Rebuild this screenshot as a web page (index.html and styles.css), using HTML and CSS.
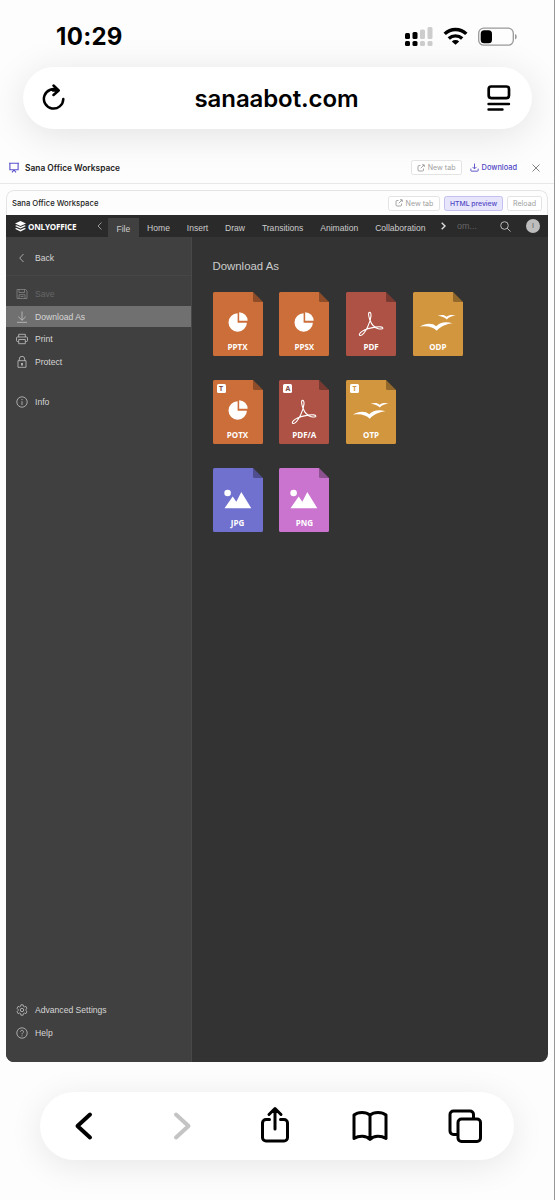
FILE: index.html
```html
<!DOCTYPE html>
<html lang="en">
  <head>
    <meta charset="UTF-8" />
    <meta name="viewport" content="width=device-width, initial-scale=1.0" />
    <link rel="stylesheet" href="styles.css">
    <title>Sana Office Workspace</title>
  </head>
  <body>
    <svg class="sprite" width="0" height="0">
      <symbol id="page" viewBox="0 0 50 64">
        <path d="M1.500 0H40L50 10V62.500a1.500 1.500 0 0 1-1.500 1.500h-47A1.500 1.500 0 0 1 0 62.500v-61A1.500 1.500 0 0 1 1.500 0z" fill="currentColor" />
        <path d="M40 0l10 10H41.500A1.500 1.500 0 0 1 40 8.500z" fill="#000" fill-opacity=".3" />
      </symbol>
      <symbol id="chart" viewBox="0 0 50 64">
        <path d="M24.600 21.300v9.400h9.300A9.200 9.200 0 1 1 24.600 21.300z" fill="#fff" />
        <path d="M26.200 20.200a8.600 8.600 0 0 1 8.400 8.600h-8.400z" fill="#fff" />
      </symbol>
      <symbol id="acrobat" viewBox="0 0 50 64">
        <path d="M23.600 20.400c-1.700 0-1 3.600.2 7.400 1.700 4.700 4.700 8 8.500 8.900 2.500.6 4.700.3 4.600-.7-.1-1.300-4-1.400-7.500-.9-4.500.6-9.500 1.900-13 4-2.600 1.600-3.900 3.900-2.500 4.300 2.200.5 5.300-3.700 7.700-8.500 2.200-4.400 3.200-8.300 3.400-11 .1-2-.3-3.500-1.400-3.500z" fill="none" stroke="#fff" stroke-width="1.100" />
      </symbol>
      <symbol id="birds" viewBox="0 0 50 64">
        <path d="M7 34.700c6-3.800 12.500-3.600 16.300-.4 3.500-3.900 9.500-5.100 16.200-3-5.800.6-11.700 3-15.700 7.400-3.800-3.700-9.500-5.300-16.800-4z" fill="#fff" />
        <path d="M24.800 23.700c4-1.300 6.800-.9 8.800 1.100 2.200-1.800 5.300-2.400 9-1.200-3.800.4-6.500 1.500-8.800 3.800-2.300-2.200-5-3.400-9-3.700z" fill="#fff" />
      </symbol>
      <symbol id="picture" viewBox="0 0 50 64">
        <circle cx="14.600" cy="25" r="3.300" fill="#fff" />
        <path d="M11.500 40.300l8.200-11.800 3.600 5.200 5-9.700 10 16.300z" fill="#fff" />
      </symbol>
      <symbol id="external" viewBox="0 0 16 16">
        <path d="M7 3H4a2 2 0 0 0-2 2v7a2 2 0 0 0 2 2h7a2 2 0 0 0 2-2V9M10 1.500h4.500V6M14 2L7.500 8.500" />
      </symbol>
    </svg>

    <header class="status">
      <span class="time">10:29</span>
      <svg class="status-icons" width="114" height="22" viewBox="0 0 114 22">
        <g>
          <rect x="1" y="7" width="5" height="6" rx="1.500" />
          <rect x="1" y="15" width="5" height="5" rx="1.500" />
          <rect x="8.500" y="6" width="5" height="7" rx="1.500" />
          <rect x="8.500" y="15" width="5" height="5" rx="1.500" />
          <g fill="#cdcdcd">
            <rect x="16" y="3.500" width="5" height="9.500" rx="1.500" />
            <rect x="16" y="15" width="5" height="5" rx="1.500" />
            <rect x="23.500" y="1" width="5" height="12" rx="1.500" />
            <rect x="23.500" y="15" width="5" height="5" rx="1.500" />
          </g>
        </g>
        <g fill="none" stroke="#000" stroke-width="3.400">
          <path d="M40.700 7.900a15.500 15.500 0 0 1 21.600 0" />
          <path d="M44.800 12.500a10 10 0 0 1 13.400 0" />
        </g>
        <path d="M51.500 18.800l-3.700-3.300a5.500 5.500 0 0 1 7.400 0z" />
        <rect x="74.700" y="2.200" width="34.600" height="17" rx="5" fill="none" stroke="#999" stroke-width="1.300" />
        <rect x="76.700" y="4.200" width="11.300" height="13" rx="3.500" />
        <path d="M111 8v5.500c2.300-.8 2.300-4.700 0-5.500z" fill="#999" />
      </svg>
    </header>

    <div class="address">
      <svg width="24" height="28" viewBox="0 0 24 28" fill="none" stroke="#000" stroke-width="2.500" stroke-linecap="round" stroke-linejoin="round">
        <path d="M21.300 15A9.700 9.700 0 1 1 16.500 6.500H11M11.500 1.500l5.200 5-5.200 4.500" />
      </svg>
      <span class="domain">sanaabot.com</span>
      <svg width="24" height="28" viewBox="0 0 24 28" fill="none" stroke="#000" stroke-width="2.700" stroke-linecap="round">
        <rect x="1.700" y="2.500" width="20.300" height="11.600" rx="2.500" />
        <path d="M1.500 20h20.500M1.500 25.500h14" stroke-width="2.400" />
      </svg>
    </div>

    <div class="app-bar">
      <svg class="easel" width="10" height="11" viewBox="0 0 10 11" fill="none" stroke="#5a50cc" stroke-width="1.100">
        <path d="M0 1.200h10M.9 1.200v6.600h8.200V1.200M3 10.300l2-2.300 2 2.300" />
      </svg>
      <strong>Sana Office Workspace</strong>
      <button class="btn btn-top"><svg class="line-icon" width="8" height="8"><use href="#external" /></svg>New tab</button>
      <a class="download">
        <svg width="9" height="9" viewBox="0 0 16 16" fill="none" stroke="currentColor" stroke-width="1.600">
          <path d="M8 1v9M4.500 7L8 10.500 11.500 7M1.500 10v3.500a1 1 0 0 0 1 1h11a1 1 0 0 0 1-1V10" />
        </svg>Download</a>
      <svg class="close" width="8" height="8" viewBox="0 0 8 8" stroke="#777" stroke-width=".9"><path d="M.5.5l7 7M7.500.5l-7 7" /></svg>
    </div>

    <main class="workspace">
      <div class="workspace-bar">
        <span class="workspace-name">Sana Office Workspace</span>
        <button class="btn btn-tab"><svg class="line-icon" width="8" height="8"><use href="#external" /></svg>New tab</button>
        <button class="btn btn-preview">HTML preview</button>
        <button class="btn btn-reload">Reload</button>
      </div>

      <nav class="tabs">
        <svg class="logo" width="11" height="11" viewBox="0 0 11 11" fill="#fff">
          <path d="M5.500 0L11 2.500 5.500 5 0 2.500z" />
          <path d="M1.500 4.300l4 1.800 4-1.800 1.500.8-5.500 2.500L0 5.100z" />
          <path d="M1.500 7l4 1.800 4-1.800 1.500.8-5.500 2.600L0 7.800z" />
        </svg>
        <span class="brand">ONLYOFFICE</span>
        <svg class="prev" width="5" height="8" viewBox="0 0 5 8" fill="none" stroke="#999" stroke-width="1"><path d="M4.500.5L1 4l3.500 3.500" /></svg>
        <span class="tab active">File</span>
        <span class="tab">Home</span>
        <span class="tab">Insert</span>
        <span class="tab">Draw</span>
        <span class="tab">Transitions</span>
        <span class="tab">Animation</span>
        <span class="tab">Collaboration</span>
        <svg class="next" width="5" height="8" viewBox="0 0 5 8" fill="none" stroke="#ddd" stroke-width="1.400"><path d="M.7.7L4 4 .7 7.300" /></svg>
        <span class="doc-name">om...</span>
        <svg class="search" width="11" height="11" viewBox="0 0 11 11" fill="none" stroke="#bbb" stroke-width="1"><circle cx="4.500" cy="4.500" r="3.800" /><path d="M7.200 7.200l3.300 3.300" /></svg>
        <span class="avatar">I</span>
      </nav>

      <div class="panel">
        <aside class="menu">
          <a class="item back">
            <svg viewBox="0 0 12 12"><path d="M7.500 2L3.700 6l3.800 4" /></svg>Back</a>
          <a class="item disabled">
            <svg viewBox="0 0 12 12"><path d="M1 1.500h8.500L11 3v7.500H1zM3 1.500v3h5.500v-3M3 10.500V6.700h6v3.800M4.500 8.500h3" /></svg>Save</a>
          <a class="item selected">
            <svg viewBox="0 0 12 12"><path d="M6 .5v8.700M2.300 5.700L6 9.300l3.700-3.600M1 11.300h10" /></svg>Download As</a>
          <a class="item">
            <svg viewBox="0 0 12 12"><path d="M2.700 4V1.300h6.600V4M2.700 8.500H1.500a1 1 0 0 1-1-1V5a1 1 0 0 1 1-1h9a1 1 0 0 1 1 1v2.500a1 1 0 0 1-1 1H9.300M2.700 6.500h6.600v4.200H2.700z" /></svg>Print</a>
          <a class="item">
            <svg viewBox="0 0 12 12"><path d="M3.300 4.700V3a2.700 2.700 0 0 1 5.400 0v1.700M2 4.700h8v6.600H2z" /><path d="M6 7v2.500" stroke-width="1.700" /></svg>Protect</a>
          <a class="item info">
            <svg viewBox="0 0 12 12"><circle cx="6" cy="6" r="5.200" /><path d="M6 5.200V9M6 3v1.100" /></svg>Info</a>
          <a class="item settings">
            <svg viewBox="0 0 12 12"><path d="M4.900.8h2.200l.3 1.500 1 .6 1.500-.5L11 4.300 9.900 5.400v1.200L11 7.700 9.900 9.600l-1.500-.5-1 .6-.3 1.500H4.900l-.3-1.500-1-.6-1.500.5L1 7.700l1.100-1.100V5.400L1 4.300l1.100-1.900 1.500.5 1-.6z" /><circle cx="6" cy="6" r="1.700" /></svg>Advanced Settings</a>
          <a class="item">
            <svg viewBox="0 0 12 12"><circle cx="6" cy="6" r="5.200" /><path d="M4.500 4.800c0-2 3-2 3 0C7.500 6 6 6 6 7.300M6 8.300v1" /></svg>Help</a>
        </aside>

        <section class="formats">
          <h1>Download As</h1>
          <div class="grid">
            <div class="file orange"><svg><use href="#page" /><use href="#chart" /></svg><span>PPTX</span></div>
            <div class="file orange"><svg><use href="#page" /><use href="#chart" /></svg><span>PPSX</span></div>
            <div class="file red"><svg><use href="#page" /><use href="#acrobat" /></svg><span>PDF</span></div>
            <div class="file amber"><svg><use href="#page" /><use href="#birds" /></svg><span>ODP</span></div>
            <div class="file orange"><svg><use href="#page" /><use href="#chart" /></svg><b>T</b><span>POTX</span></div>
            <div class="file red"><svg><use href="#page" /><use href="#acrobat" /></svg><b>A</b><span>PDF/A</span></div>
            <div class="file amber"><svg><use href="#page" /><use href="#birds" /></svg><b>T</b><span>OTP</span></div>
            <div class="file blue row-start"><svg><use href="#page" /><use href="#picture" /></svg><span>JPG</span></div>
            <div class="file pink"><svg><use href="#page" /><use href="#picture" /></svg><span>PNG</span></div>
          </div>
        </section>
      </div>
    </main>

    <footer class="toolbar">
      <svg viewBox="0 0 40 40"><path d="M25 8.500L12.500 20 25 31.500" stroke-width="4" /></svg>
      <svg viewBox="0 0 40 40" class="muted"><path d="M16 8.500L28.500 20 16 31.500" stroke-width="4" /></svg>
      <svg viewBox="0 0 40 40"><path d="M14.500 13.500H11a3.500 3.500 0 0 0-3.500 3.500v14.500a3.500 3.500 0 0 0 3.500 3.500h18a3.500 3.500 0 0 0 3.500-3.500V17a3.500 3.500 0 0 0-3.500-3.500h-3.500M20 23V3.500M14 8.500l6-6 6 6" /></svg>
      <svg viewBox="0 0 40 40"><path d="M20 9v24M20 9C16 5.500 8 5.500 4 9v23.500c5-3 12-3 16 .8C24 29.500 31 29.500 36 32.500V9C32 5.500 24 5.500 20 9z" /></svg>
      <svg viewBox="0 0 40 40"><rect x="13" y="13" width="22.500" height="22.500" rx="3.500" /><path d="M28.500 12V8.500A3.500 3.500 0 0 0 25 5H8.500A3.500 3.500 0 0 0 5 8.500V25a3.500 3.500 0 0 0 3.500 3.500H12" /></svg>
    </footer>
  </body>
</html>
```

FILE: styles.css
```css
* {
  box-sizing: border-box;
}

body {
  display: flex;
  flex-direction: column;
  width: 555px;
  height: 1200px;
  margin: 0;
  border-right: 1px solid #999;
  background: #fdfdfd;
  font-family: Inter, sans-serif;
  overflow: hidden;
}

.sprite {
  position: absolute;
}

/* phone chrome */
.status {
  display: flex;
  justify-content: space-between;
  align-items: center;
  flex: none;
  height: 67px;
  padding: 7px 36px 0 56px;
}

.time {
  font-size: 24px;
  font-weight: 700;
  line-height: 24px;
  letter-spacing: 0.3px;
}

.address {
  display: flex;
  justify-content: space-between;
  align-items: center;
  flex: none;
  height: 62px;
  margin: 0 22px 0 23px;
  padding: 0 21px 0 19px;
  border-radius: 31px;
  background: #fff;
  box-shadow: 0 6px 38px rgba(0, 0, 0, 0.11);
}

.domain {
  font-size: 24px;
  font-weight: 600;
  letter-spacing: -0.1px;
}

.app-bar {
  display: flex;
  align-items: center;
  flex: none;
  height: 32px;
  margin-top: 23px;
  padding: 0 14px 0 9px;
  border-bottom: 1px solid #e8e8e8;
}

.app-bar strong {
  margin-left: 6px;
  font-size: 8.4px;
  font-weight: 600;
  color: #222;
}

.btn {
  display: flex;
  align-items: center;
  justify-content: center;
  height: 15px;
  padding: 0;
  border: 1px solid #e3e3e3;
  border-radius: 2.5px;
  background: #fff;
  color: #a0a0a0;
  font: 7.1px Inter, sans-serif;
  white-space: nowrap;
}

.line-icon {
  margin-right: 3px;
  fill: none;
  stroke: #888;
  stroke-width: 1.5;
}

.btn-top {
  width: 51px;
  margin-left: auto;
}

.download {
  display: flex;
  align-items: center;
  gap: 3px;
  margin: 0 15px 0 8px;
  color: #5148c4;
  font-size: 7.4px;
  font-weight: 500;
}

.workspace {
  display: flex;
  flex-direction: column;
  flex: none;
  width: 542px;
  height: 872px;
  margin: 6px 0 0 6px;
  border-radius: 8px;
  overflow: hidden;
}

.workspace-bar {
  display: flex;
  align-items: center;
  gap: 4px;
  height: 25px;
  flex: none;
  padding: 0 5px;
  border: 1px solid #e4e4e4;
  border-bottom: 0;
  border-radius: 8px 8px 0 0;
  background: #fdfdfd;
}

.workspace-name {
  margin-right: auto;
  font-size: 7.7px;
  font-weight: 500;
  color: #222;
}

.btn-tab {
  width: 52px;
}

.btn-preview {
  width: 59px;
  border-color: #c3c0ef;
  background: #e6e5fc;
  color: #5148c4;
  font-size: 6.8px;
  font-weight: 500;
}

.btn-reload {
  width: 35px;
}

/* editor */
.tabs {
  display: flex;
  align-items: center;
  flex: none;
  height: 22px;
  padding: 0 8px 0 9px;
  background: #2a2a2a;
  color: #ccc;
  font: 8.55px "Liberation Sans", Arial, sans-serif;
}

.brand {
  width: 49px;
  margin-left: 2px;
  color: #fff;
  font: 700 8.1px "Open Sans", sans-serif;
  letter-spacing: -0.2px;
}

.prev {
  margin: 0 6px 0 20px;
}

.tab {
  padding: 3px 8.45px 0;
  line-height: 16px;
}

.tab.active {
  align-self: flex-end;
  background: #404040;
}

.next {
  margin-left: 7px;
}

.doc-name {
  margin-left: 11px;
  color: #666;
  font-size: 9px;
}

.search {
  margin-left: auto;
}

.avatar {
  width: 14px;
  height: 14px;
  margin-left: 15px;
  border-radius: 50%;
  background: #bdbdbd;
  color: #555;
  font-size: 7px;
  line-height: 14px;
  text-align: center;
}

.panel {
  display: flex;
  flex: 1;
  background: #333;
}

.menu {
  display: flex;
  flex-direction: column;
  gap: 2px;
  width: 186px;
  padding: 10px 0 19px;
  border-right: 1px solid #484848;
  background: #404040;
  font: 8.6px "Liberation Sans", Arial, sans-serif;
}

.item {
  display: flex;
  align-items: center;
  gap: 7px;
  height: 20.8px;
  padding-left: 10px;
  color: #d6d6d6;
}

.item svg {
  width: 12px;
  height: 12px;
  fill: none;
  stroke: #c4c4c4;
  stroke-width: 0.8;
}

.back {
  height: 29px;
  padding-bottom: 6px;
  border-bottom: 1px solid #464646;
  margin-bottom: 5.500px;
}

.disabled {
  color: #666;
}

.disabled svg {
  stroke: #858585;
}

.selected {
  background: #707070;
}

.info {
  margin-top: 17px;
}

.settings {
  margin-top: auto;
}

.formats {
  padding: 23px 0 0 20.5px;
}

.formats h1 {
  margin: 0 0 18.5px;
  color: #ccc;
  font: 11.4px/13px "Liberation Sans", Arial, sans-serif;
}

.grid {
  display: grid;
  grid-template-columns: repeat(4, 50px);
  gap: 24.2px 16.8px;
}

.file {
  position: relative;
  display: flex;
  justify-content: center;
  align-items: flex-end;
  height: 64px;
}

.file svg {
  position: absolute;
  inset: 0;
  width: 50px;
  height: 64px;
}

.file span {
  position: relative;
  padding-bottom: 3px;
  color: #fff;
  font: 700 8px/12px "Open Sans", sans-serif;
}

.file b {
  position: absolute;
  top: 4px;
  left: 4px;
  width: 9px;
  height: 9px;
  border-radius: 1.5px;
  background: #fff;
  font: 700 7px/9px "Open Sans", sans-serif;
  text-align: center;
}

.row-start {
  grid-column: 1;
}

.orange {
  color: #cc6e3a;
}

.red {
  color: #ad5245;
}

.amber {
  color: #d2963e;
}

.blue {
  color: #7070cf;
}

.pink {
  color: #ca74cf;
}

.file.orange b,
.file.red b {
  color: #7d4a42;
}

/* browser toolbar */
.toolbar {
  display: flex;
  justify-content: space-between;
  align-items: center;
  flex: none;
  height: 68px;
  margin: 30px 40px 0 40px;
  padding: 0 29px 0 25px;
  border-radius: 34px;
  background: #fff;
  box-shadow: 0 6px 34px rgba(0, 0, 0, 0.09);
}

.toolbar svg {
  width: 40px;
  height: 40px;
  fill: none;
  stroke: #000;
  stroke-width: 3;
  stroke-linecap: round;
  stroke-linejoin: round;
}

.toolbar .muted {
  stroke: #c4c4c4;
}
```
